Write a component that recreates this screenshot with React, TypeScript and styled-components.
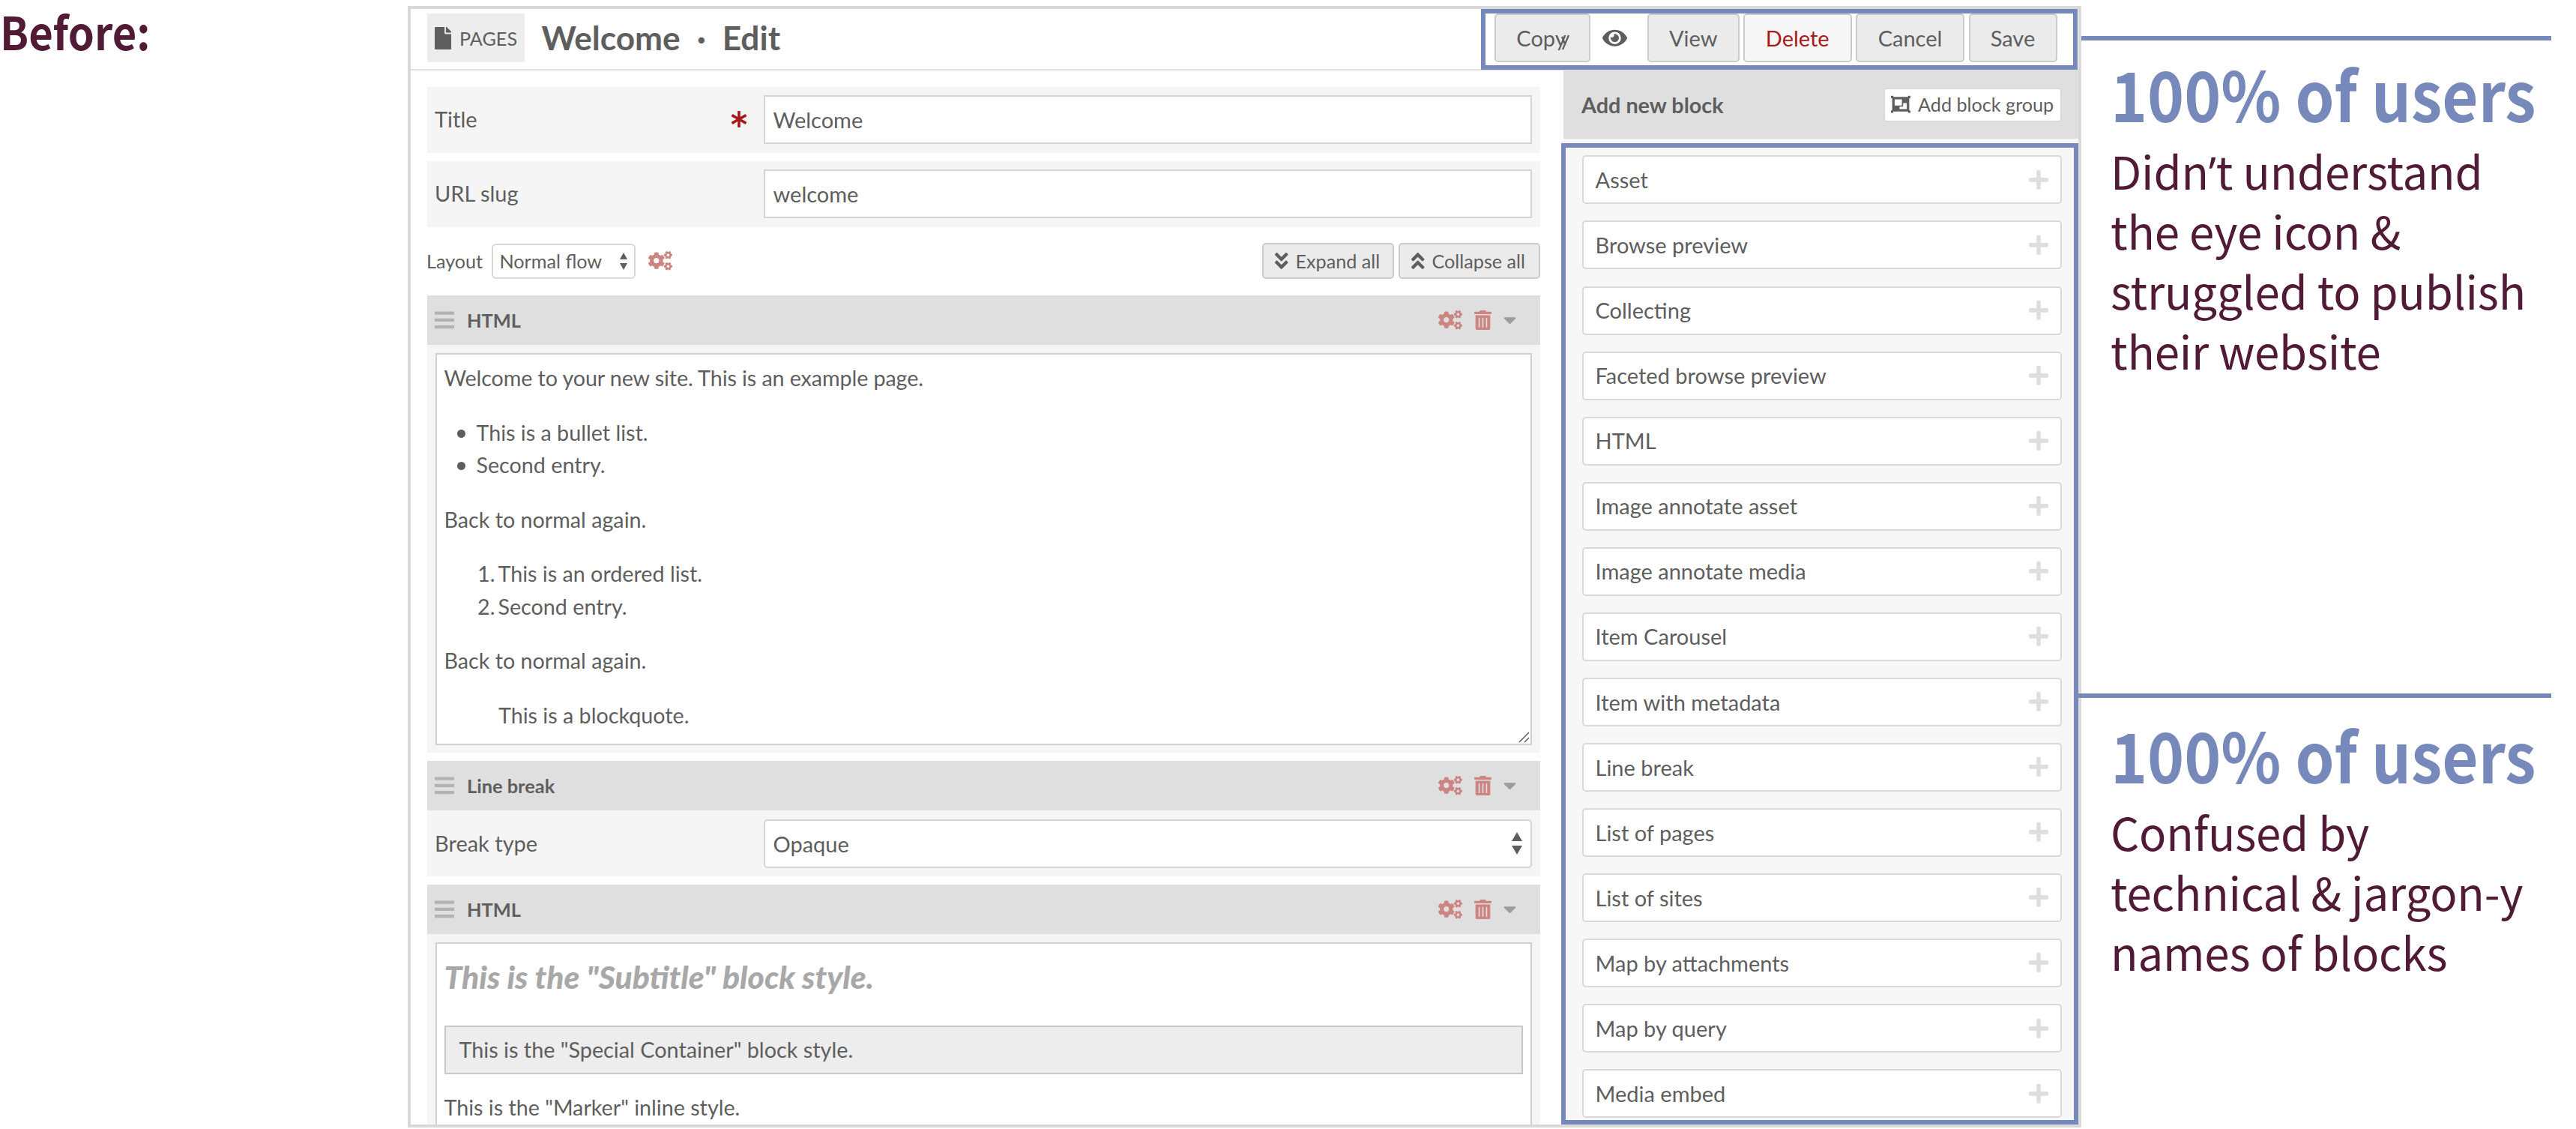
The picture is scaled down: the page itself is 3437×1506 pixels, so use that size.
import React from "react";
import styled, { createGlobalStyle } from "styled-components";
import {
  FaAngleDoubleDown,
  FaAngleDoubleUp,
  FaAsterisk,
  FaBars,
  FaCaretDown,
  FaCogs,
  FaEye,
  FaFile,
  FaObjectGroup,
  FaPlus,
  FaTrashAlt,
} from "react-icons/fa";

const c = {
  ink: "#5e5e5e",
  plum: "#511a35",
  blue: "#7789ba",
  line: "#d9d9d9",
  panel: "#f5f5f5",
  bar: "#dfdfdf",
  red: "#a91919",
  rose: "#cc8582",
};

const GlobalStyle = createGlobalStyle`
  * { box-sizing: border-box; }
  body {
    margin: 0;
    background: #fff;
    color: ${c.ink};
    font-family: Lato, "Liberation Sans", sans-serif;
    font-size: 29px;
  }
  svg { display: block; flex: none; }
`;

const Slide = styled.main`
  display: flex;
  width: 3437px;
  height: 1506px;
  overflow: hidden;
`;

const display = `font-family: "Noto Sans CJK SC", "Open Sans", sans-serif;`;

const Aside = styled.div`
  width: 544px;
`;

const BeforeLabel = styled.h1`
  ${display}
  width: max-content;
  margin: 0;
  color: ${c.plum};
  font-size: 61px;
  font-weight: 700;
  line-height: 82px;
  white-space: nowrap;
  transform: scaleX(0.92);
  transform-origin: left;
`;

const Frame = styled.section`
  display: flex;
  flex-direction: column;
  width: 2233px;
  height: 1496px;
  margin-top: 8px;
  border: 4px solid ${c.line};
  overflow: hidden;
`;

const Header = styled.header`
  display: flex;
  align-items: flex-start;
  flex: none;
  height: 82px;
  padding-left: 22px;
  border-bottom: 2px solid #e0e0e0;
`;

const Badge = styled.div`
  display: flex;
  align-items: center;
  gap: 11px;
  width: 130px;
  height: 65px;
  margin-top: 6px;
  padding-left: 9.5px;
  background: #ededed;
  font-size: 25.2px;
  svg { width: 22.5px; height: 30px; }
`;

const PageTitle = styled.h2`
  display: flex;
  margin: 5px auto 0 22.5px;
  font-size: 44.2px;
  font-weight: 700;
  line-height: 65px;
  white-space: pre;
`;

const Dot = styled.span`
  width: 56px;
  text-align: center;
`;

const Actions = styled.div`
  display: flex;
  width: 796px;
  height: 81px;
  margin-right: 1px;
  padding-left: 12px;
  border: 6px solid ${c.blue};
  > svg { width: 33px; height: 29.4px; margin: 18px 27px 0 16px; }
`;

const Button = styled.button<{ $w: number; $danger?: boolean }>`
  position: relative;
  display: flex;
  align-items: center;
  justify-content: center;
  width: ${(p) => p.$w}px;
  height: 65px;
  margin: 0 5.5px 0 0;
  padding: 0 0 1px;
  border: 2px solid #cbcbcb;
  border-radius: 5px;
  background: ${(p) => (p.$danger ? "#f7f7f7" : "#ebebeb")};
  color: ${(p) => (p.$danger ? c.red : c.ink)};
  font: inherit;
  &:first-child { margin-right: 0; padding-right: 3px; }
`;

const CursorMark = styled.svg`
  position: absolute;
  left: 84px;
  top: 24px;
`;

const Columns = styled.div`
  display: flex;
  flex: 1;
  min-height: 0;
  padding-left: 22px;
`;

const Main = styled.div`
  width: 1485px;
  margin-right: 31px;
  padding-top: 21.5px;
`;

const Field = styled.div`
  display: flex;
  align-items: center;
  height: 88px;
  margin-bottom: 11px;
  padding: 0 11px 0 10px;
  background: ${c.panel};
`;

const FieldLabel = styled.label`
  display: flex;
  align-items: center;
  justify-content: space-between;
  width: 439px;
  padding: 0 22px 2px 0;
  svg { width: 22px; height: 22px; color: ${c.red}; }
`;

const Input = styled.div<{ $round?: boolean }>`
  display: flex;
  align-items: center;
  justify-content: space-between;
  flex: 1;
  height: 65px;
  padding: 0 11px 0 10.5px;
  border: 2px solid #d4d4d4;
  border-radius: ${(p) => (p.$round ? 5 : 0)}px;
  background: #fff;
`;

const Arrows = styled.span<{ $w: number; $h: number; $gap: number }>`
  display: flex;
  flex-direction: column;
  gap: ${(p) => p.$gap}px;
  &::before, &::after {
    content: "";
    border: ${(p) => p.$w / 2}px solid transparent;
  }
  &::before { border-top: 0; border-bottom: ${(p) => p.$h}px solid ${c.ink}; }
  &::after { border-bottom: 0; border-top: ${(p) => p.$h}px solid ${c.ink}; }
`;

const LayoutRow = styled.div`
  display: flex;
  align-items: center;
  height: 48px;
  margin: 21.5px 0 22px;
  font-size: 25.2px;
`;

const LayoutName = styled.span`
  width: 85px;
  margin-left: -1px;
`;

const LayoutSelect = styled.div`
  display: flex;
  align-items: center;
  justify-content: space-between;
  width: 192px;
  height: 47px;
  margin: 0 17.5px 0 1.5px;
  padding: 0 9px;
  border: 2px solid ${c.line};
  border-radius: 6px;
`;

const Cogs = styled(FaCogs)`
  width: 32px;
  height: 25.6px;
  color: ${c.rose};
`;

const SmallButton = styled.button<{ $w: number }>`
  display: flex;
  align-items: center;
  gap: 10px;
  width: ${(p) => p.$w}px;
  height: 48px;
  margin-left: 6px;
  padding: 0 0 1px 15px;
  border: 2px solid #cbcbcb;
  border-radius: 5px;
  background: #ebebeb;
  color: ${c.ink};
  font: inherit;
  white-space: nowrap;
  svg { width: 17.5px; height: 28px; }
`;

const Push = styled.span`
  margin-left: auto;
`;

const BlockHeader = styled.div`
  display: flex;
  align-items: center;
  height: 66px;
  padding: 0 32.5px 0 9.5px;
  background: ${c.bar};
  font-size: 25.4px;
  font-weight: 700;
`;

const Handle = styled(FaBars)`
  width: 26px;
  height: 29.7px;
  margin-right: 17.5px;
  color: #b2b2b2;
`;

const Trash = styled(FaTrashAlt)`
  width: 23px;
  height: 26.3px;
  margin: 0 16px;
  color: ${c.rose};
`;

const Caret = styled(FaCaretDown)`
  width: 17px;
  height: 27.2px;
  color: #9c9c9c;
`;

const BlockBody = styled.div<{ $h: number }>`
  height: ${(p) => p.$h}px;
  margin-bottom: 11px;
  padding: 10.5px 11px;
  background: ${c.panel};
`;

const Editor = styled.div<{ $h: number }>`
  position: relative;
  height: ${(p) => p.$h}px;
  padding: 10.5px 10.5px 0 9.5px;
  border: 2px solid #d0d0d0;
  background: #fff;
  font-size: 28.7px;
  line-height: 43.5px;
  p, ul, ol, blockquote { margin: 0 0 29px; }
  p:first-child { letter-spacing: -0.09px; }
  ul, ol { padding: 0; list-style: none; }
  ul { padding-left: 17px; }
  ol { padding-left: 44.5px; }
  li { display: flex; }
  blockquote { padding-left: 72.5px; }
`;

const Bullet = styled.span`
  width: 11px;
  height: 11px;
  margin: 17px 15px 0 0;
  border-radius: 50%;
  background: ${c.ink};
`;

const Numeral = styled.span`
  width: 27.5px;
`;

const Grip = styled.svg`
  position: absolute;
  right: 1px;
  bottom: 1px;
`;

const Subtitle = styled.h3`
  margin: -1px 0 31px;
  color: #a8a8a8;
  font-size: 42.6px;
  font-style: italic;
  font-weight: 900;
  line-height: 69px;
`;

const SpecialContainer = styled.div`
  display: flex;
  align-items: center;
  height: 65px;
  margin-bottom: 23px;
  padding: 1px 0 0 18px;
  border: 2px solid #c8c8c8;
  background: #ededed;
  font-size: 28.8px;
`;

const Sidebar = styled.aside`
  display: flex;
  flex-direction: column;
  width: 687px;
  background: #f7f7f7;
`;

const SidebarHeader = styled.div`
  display: flex;
  align-items: center;
  justify-content: space-between;
  flex: none;
  height: 91px;
  padding: 0 22.5px 0 24px;
  background: ${c.bar};
  font-size: 28.8px;
  font-weight: 700;
`;

const GroupButton = styled.button`
  display: flex;
  align-items: center;
  gap: 10.5px;
  width: 238px;
  height: 46px;
  padding: 0 0 1px 8px;
  border: 2px solid #dadada;
  border-radius: 5px;
  background: #fff;
  color: ${c.ink};
  font: inherit;
  font-size: 25.2px;
  font-weight: 400;
  white-space: nowrap;
  svg { width: 26px; height: 26px; }
`;

const BlockList = styled.div`
  display: flex;
  flex: 1;
  flex-direction: column;
  gap: 22.08px;
  min-height: 0;
  margin: 6px 0 0 -3px;
  padding: 10.4px 16px 0 22px;
  border: 6px solid ${c.blue};
  overflow: hidden;
`;

const BlockOption = styled.div`
  display: flex;
  align-items: center;
  justify-content: space-between;
  flex: none;
  height: 65px;
  padding: 0 16px 1px 15.5px;
  border: 2px solid ${c.line};
  border-radius: 5px;
  background: #fff;
  svg { width: 26px; height: 29.7px; color: #dedede; }
`;

const Notes = styled.div`
  width: 660px;
  padding-top: 48px;
`;

const Note = styled.section<{ $h?: number }>`
  height: ${(p) => (p.$h ? p.$h + "px" : "auto")};
`;

const Rule = styled.div<{ $overlap?: boolean }>`
  position: relative;
  width: ${(p) => (p.$overlap ? 631 : 627)}px;
  height: 6px;
  margin-left: ${(p) => (p.$overlap ? -4 : 0)}px;
  background: ${c.blue};
`;

const NoteTitle = styled.h2<{ $top: number }>`
  ${display}
  width: max-content;
  margin: ${(p) => p.$top}px 0 0 38.5px;
  color: ${c.blue};
  font-size: 92px;
  font-weight: 700;
  line-height: 127px;
  white-space: nowrap;
  transform: scaleX(0.905);
  transform-origin: left;
`;

const NoteText = styled.p`
  ${display}
  margin: 1px 0 0 39px;
  color: ${c.plum};
  font-size: 60px;
  letter-spacing: -0.2px;
  line-height: 80px;
  white-space: nowrap;
`;

const Apostrophe = styled.span`
  font-family: "Open Sans", sans-serif;
  line-height: 1;
`;

const BLOCKS = [
  "Asset",
  "Browse preview",
  "Collecting",
  "Faceted browse preview",
  "HTML",
  "Image annotate asset",
  "Image annotate media",
  "Item Carousel",
  "Item with metadata",
  "Line break",
  "List of pages",
  "List of sites",
  "Map by attachments",
  "Map by query",
  "Media embed",
];

function BlockBar({ title }: { title: string }) {
  return (
    <BlockHeader>
      <Handle />
      {title}
      <Push />
      <Cogs />
      <Trash />
      <Caret />
    </BlockHeader>
  );
}

export default function App() {
  return (
    <Slide>
      <GlobalStyle />
      <Aside>
        <BeforeLabel>Before:</BeforeLabel>
      </Aside>

      <Frame>
        <Header>
          <Badge>
            <FaFile />
            PAGES
          </Badge>
          <PageTitle>
            Welcome<Dot>·</Dot>Edit
          </PageTitle>
          <Actions>
            <Button $w={128}>
              Copy
              <CursorMark width="15" height="24" stroke={c.ink} strokeWidth="2.2" fill="none">
                <path d="M13 3 L5 22 M4 5 L8.5 16" />
              </CursorMark>
            </Button>
            <FaEye color={c.ink} />
            <Button $w={122.5}>View</Button>
            <Button $w={144.5} $danger>Delete</Button>
            <Button $w={145}>Cancel</Button>
            <Button $w={118}>Save</Button>
          </Actions>
        </Header>

        <Columns>
          <Main>
            <Field>
              <FieldLabel>
                Title
                <FaAsterisk />
              </FieldLabel>
              <Input>Welcome</Input>
            </Field>
            <Field>
              <FieldLabel>URL slug</FieldLabel>
              <Input>welcome</Input>
            </Field>

            <LayoutRow>
              <LayoutName>Layout</LayoutName>
              <LayoutSelect>
                Normal flow
                <Arrows $w={10} $h={9} $gap={5} />
              </LayoutSelect>
              <Cogs />
              <Push />
              <SmallButton $w={176}>
                <FaAngleDoubleDown />
                Expand all
              </SmallButton>
              <SmallButton $w={189}>
                <FaAngleDoubleUp />
                Collapse all
              </SmallButton>
            </LayoutRow>

            <BlockBar title="HTML" />
            <BlockBody $h={544}>
              <Editor $h={523}>
                <p>Welcome to your new site. This is an example page.</p>
                <ul>
                  <li><Bullet />This is a bullet list.</li>
                  <li><Bullet />Second entry.</li>
                </ul>
                <p>Back to normal again.</p>
                <ol>
                  <li><Numeral>1.</Numeral>This is an ordered list.</li>
                  <li><Numeral>2.</Numeral>Second entry.</li>
                </ol>
                <p>Back to normal again.</p>
                <blockquote>This is a blockquote.</blockquote>
                <Grip width="15" height="15" stroke={c.ink} strokeWidth="1.5">
                  <path d="M1 14 L14 1 M8 14 L14 8" />
                </Grip>
              </Editor>
            </BlockBody>

            <BlockBar title="Line break" />
            <Field>
              <FieldLabel>Break type</FieldLabel>
              <Input $round>
                Opaque
                <Arrows $w={14} $h={12} $gap={6} />
              </Input>
            </Field>

            <BlockBar title="HTML" />
            <BlockBody $h={300}>
              <Editor $h={290}>
                <Subtitle>This is the "Subtitle" block style.</Subtitle>
                <SpecialContainer>This is the "Special Container" block style.</SpecialContainer>
                <p>This is the "Marker" inline style.</p>
              </Editor>
            </BlockBody>
          </Main>

          <Sidebar>
            <SidebarHeader>
              Add new block
              <GroupButton>
                <FaObjectGroup />
                Add block group
              </GroupButton>
            </SidebarHeader>
            <BlockList>
              {BLOCKS.map((name) => (
                <BlockOption key={name}>
                  {name}
                  <FaPlus />
                </BlockOption>
              ))}
            </BlockList>
          </Sidebar>
        </Columns>
      </Frame>

      <Notes>
        <Note $h={876.5}>
          <Rule />
          <NoteTitle $top={5}>100% of users</NoteTitle>
          <NoteText>
            Didn<Apostrophe>’</Apostrophe>t understand
            <br />
            the eye icon &amp;
            <br />
            struggled to publish
            <br />
            their website
          </NoteText>
        </Note>
        <Note>
          <Rule $overlap />
          <NoteTitle $top={10.5}>100% of users</NoteTitle>
          <NoteText>
            Confused by
            <br />
            technical &amp; jargon-y
            <br />
            names of blocks
          </NoteText>
        </Note>
      </Notes>
    </Slide>
  );
}
